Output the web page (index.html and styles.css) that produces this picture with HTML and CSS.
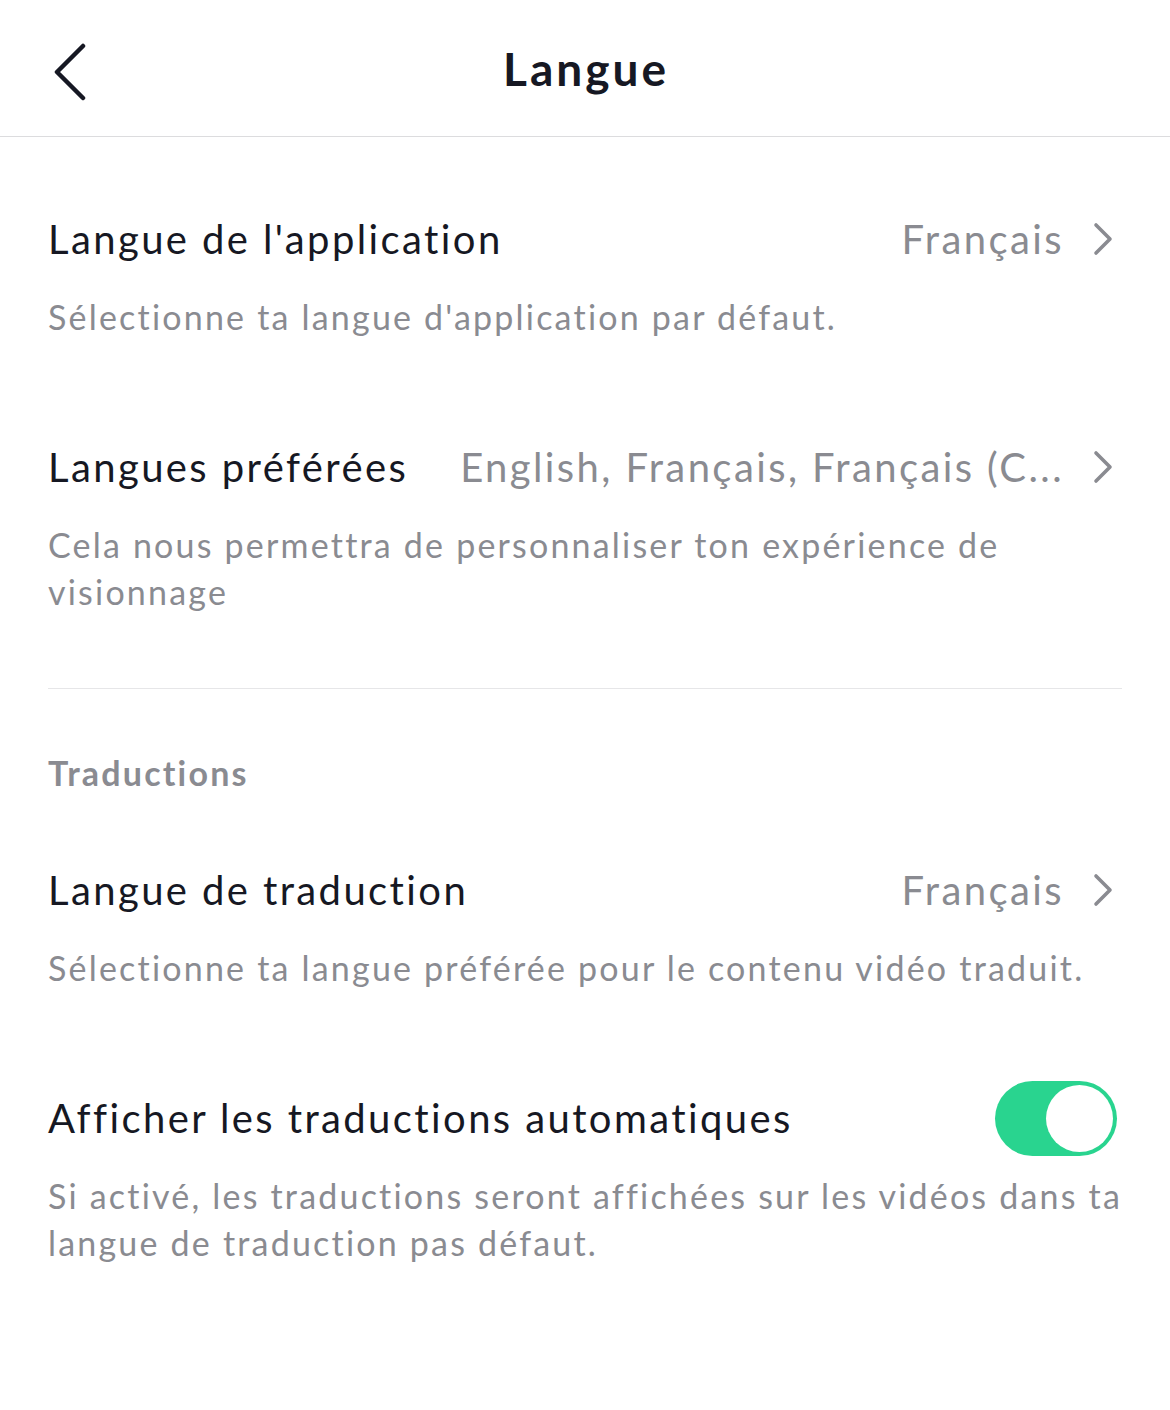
FILE: index.html
```html
<!DOCTYPE html>
<html lang="fr">
<head>
<meta charset="utf-8">
<title>Langue</title>
<link rel="stylesheet" href="styles.css">
</head>
<body>
<div class="screen">
  <header class="nav">
    <button class="back" aria-label="Retour">
      <svg width="40" height="60" viewBox="0 0 40 60"><polyline points="33,5 7,31 33,57" fill="none" stroke="#161823" stroke-width="4.5" stroke-linecap="round" stroke-linejoin="round"/></svg>
    </button>
    <h1 class="nav-title">Langue</h1>
  </header>

  <main class="content">
    <section class="item item-first">
      <div class="item-row">
        <span class="item-title">Langue de l'application</span>
        <span class="item-value">Français</span>
        <svg class="chev" width="22" height="34" viewBox="0 0 22 34"><polyline points="4,3 18,17 4,31" fill="none" stroke="#8a8b91" stroke-width="3.6" stroke-linecap="round" stroke-linejoin="round"/></svg>
      </div>
      <p class="item-desc">Sélectionne ta langue d'application par défaut.</p>
    </section>

    <section class="item">
      <div class="item-row">
        <span class="item-title">Langues préférées</span>
        <span class="item-value item-value-fill">English, Français, Français (C...</span>
        <svg class="chev" width="22" height="34" viewBox="0 0 22 34"><polyline points="4,3 18,17 4,31" fill="none" stroke="#8a8b91" stroke-width="3.6" stroke-linecap="round" stroke-linejoin="round"/></svg>
      </div>
      <p class="item-desc">Cela nous permettra de personnaliser ton expérience de<br>visionnage</p>
    </section>

    <hr class="divider">

    <h2 class="section-title">Traductions</h2>

    <section class="item item-after-section">
      <div class="item-row">
        <span class="item-title">Langue de traduction</span>
        <span class="item-value">Français</span>
        <svg class="chev" width="22" height="34" viewBox="0 0 22 34"><polyline points="4,3 18,17 4,31" fill="none" stroke="#8a8b91" stroke-width="3.6" stroke-linecap="round" stroke-linejoin="round"/></svg>
      </div>
      <p class="item-desc">Sélectionne ta langue préférée pour le contenu vidéo traduit.</p>
    </section>

    <section class="item">
      <div class="item-row">
        <span class="item-title">Afficher les traductions automatiques</span>
        <span class="toggle on"><span class="knob"></span></span>
      </div>
      <p class="item-desc">Si activé, les traductions seront affichées sur les vidéos dans ta<br>langue de traduction pas défaut.</p>
    </section>
  </main>
</div>
</body>
</html>
```

FILE: styles.css
```css
* { box-sizing: border-box; }
html, body {
  margin: 0;
  padding: 0;
  background: #ffffff;
}
body {
  font-family: "Lato", "Liberation Sans", sans-serif;
  color: #161823;
}
.screen {
  width: 1170px;
  min-height: 1410px;
  background: #fff;
}
.nav {
  height: 137px;
  border-bottom: 1px solid #dcdcde;
  display: flex;
  align-items: center;
  justify-content: center;
  position: relative;
}
.back {
  position: absolute;
  left: 50px;
  top: 41px;
  border: 0;
  background: none;
  padding: 0;
  width: 40px;
  height: 60px;
}
.back svg { display: block; }
.nav-title {
  margin: 0;
  font-size: 46px;
  font-weight: 700;
  letter-spacing: 3px;
  color: #161823;
  position: relative;
  top: 0;
  left: 1px;
}
.content {
  padding: 75px 48px 0 48px;
}
.item { margin-top: 100px; }
.item-first { margin-top: 0; }
.item-after-section { margin-top: 70px; }
.item-row {
  display: flex;
  align-items: center;
  height: 54px;
}
.item-title {
  font-size: 40px;
  letter-spacing: 2.4px;
  color: #161823;
  white-space: nowrap;
  flex-shrink: 0;
}
.item-value {
  margin-left: auto;
  font-size: 40px;
  letter-spacing: 2.4px;
  color: #8a8b91;
  white-space: nowrap;
}
.item-value-fill {
  margin-left: 40px;
  flex: 1 1 auto;
  min-width: 0;
  overflow: hidden;
  text-overflow: ellipsis;
  text-align: right;
}
.chev {
  flex-shrink: 0;
  margin-left: 28px;
  margin-right: 8px;
}
.item-desc {
  margin: 27px 0 0 0;
  font-size: 34px;
  letter-spacing: 2.2px;
  line-height: 47px;
  color: #8a8b91;
  white-space: nowrap;
}
.divider {
  border: 0;
  border-top: 1px solid #e6e6e8;
  margin: 73px 0 0 0;
}
.section-title {
  margin: 64px 0 0 0;
  font-size: 34px;
  letter-spacing: 2.2px;
  line-height: 40px;
  font-weight: 700;
  color: #8a8b91;
}
.toggle {
  margin-left: auto;
  width: 122px;
  height: 75px;
  border-radius: 38px;
  background: #29d48f;
  position: relative;
  flex-shrink: 0;
  margin-right: 5px;
  margin-top: -10px;
  margin-bottom: -11px;
}
.knob {
  position: absolute;
  right: 4px;
  top: 4px;
  width: 67px;
  height: 67px;
  border-radius: 50%;
  background: #fff;
}
```
